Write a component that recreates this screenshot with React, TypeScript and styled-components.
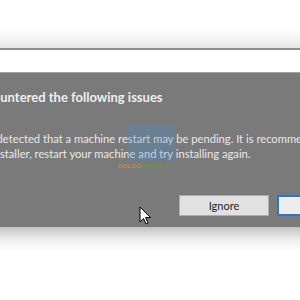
import React from "react";
import styled, { createGlobalStyle } from "styled-components";

const Global = createGlobalStyle`
  html, body { margin: 0; background: #ffffff; }
  body { font-family: "Lato", "Liberation Sans", sans-serif; }
`;

const Page = styled.div`
  width: 300px;
  height: 300px;
  display: flex;
  flex-direction: column;
  overflow: hidden;
  position: relative;
  background: #ffffff;
`;

const TopBar = styled.div`
  height: 48px;
  flex: none;
  background: linear-gradient(to bottom, #ffffff 0px, #ffffff 28px, #f3f3f3 40px, #e6e6e6 48px);
  border-bottom: 2px solid #8e8e8e;
`;

const Gap = styled.div`
  height: 22px;
  flex: none;
  background: #ffffff;
`;

const Dialog = styled.div`
  flex: none;
  height: 154px;
  background: #7a7a7a;
  border-top: 1px solid #a2a2a2;
  overflow: hidden;
  position: relative;
`;

const Content = styled.div`
  margin-left: -28px;
  padding-top: 16px;
  display: flex;
  flex-direction: column;
`;

const Title = styled.div`
  font-family: "Lato", sans-serif;
  font-weight: 700;
  font-size: 13px;
  line-height: 16px;
  color: #efefef;
  white-space: nowrap;
`;

const Message = styled.div`
  margin-top: 26px;
  display: flex;
  flex-direction: column;
`;

const Line = styled.div<{ $shift?: number }>`
  font-family: "Lato", sans-serif;
  font-size: 11.2px;
  line-height: 15px;
  color: #e9e9e9;
  white-space: nowrap;
  margin-left: ${(p) => p.$shift ?? 0}px;
`;

const Buttons = styled.div`
  display: flex;
  gap: 8px;
  margin-top: 34px;
  margin-left: 207px;
`;

const Button = styled.div<{ $primary?: boolean }>`
  flex: none;
  width: 90px;
  height: 21px;
  box-sizing: border-box;
  display: flex;
  align-items: center;
  justify-content: center;
  font-family: "Lato", sans-serif;
  font-size: 11px;
  color: #1e1e1e;
  background: ${(p) => (p.$primary ? "#ededed" : "#e1e1e1")};
  border: ${(p) => (p.$primary ? "2px solid #2f74c9" : "1px solid #adadad")};
`;

const Watermark = styled.div`
  position: absolute;
  left: 128px;
  top: 52px;
  width: 47px;
  height: 36px;
  background: rgba(70, 140, 210, 0.28);
`;

const WatermarkText = styled.div`
  position: absolute;
  left: 118px;
  top: 90px;
  font-family: "Liberation Sans", sans-serif;
  font-size: 6px;
  font-weight: 700;
  letter-spacing: 0.2px;
  opacity: 0.6;
`;

const Orange = styled.span`
  color: #e6a030;
`;

const Green = styled.span`
  color: #5aa845;
`;

const Shadow = styled.div`
  height: 24px;
  flex: none;
  background: linear-gradient(to bottom, #c2c2c2, #ececec 12px, #ffffff 24px);
`;

const Cursor = styled.svg`
  position: absolute;
  left: 139px;
  top: 206px;
`;

export default function App() {
  return (
    <>
      <Global />
      <Page>
        <TopBar />
        <Gap />
        <Dialog>
          <Content>
            <Title>Encountered the following issues</Title>
            <Message>
              <Line $shift={-7}>It was detected that a machine restart may be pending. It is recommended that you exit</Line>
              <Line>the installer, restart your machine and try installing again.</Line>
            </Message>
            <Buttons>
              <Button>Ignore</Button>
              <Button $primary>Cancel</Button>
            </Buttons>
          </Content>
          <Watermark />
          <WatermarkText>
            <Orange>DOLOG</Orange>
            <Green>SERVICE</Green>
          </WatermarkText>
        </Dialog>
        <Shadow />
        <Cursor width="13" height="20" viewBox="0 0 13 20">
          <path d="M1 1 L1 16 L4.5 12.5 L7 18 L9 17 L6.6 11.6 L11.5 11.6 Z" fill="#ffffff" stroke="#000000" strokeWidth="1" strokeLinejoin="round" />
        </Cursor>
      </Page>
    </>
  );
}
